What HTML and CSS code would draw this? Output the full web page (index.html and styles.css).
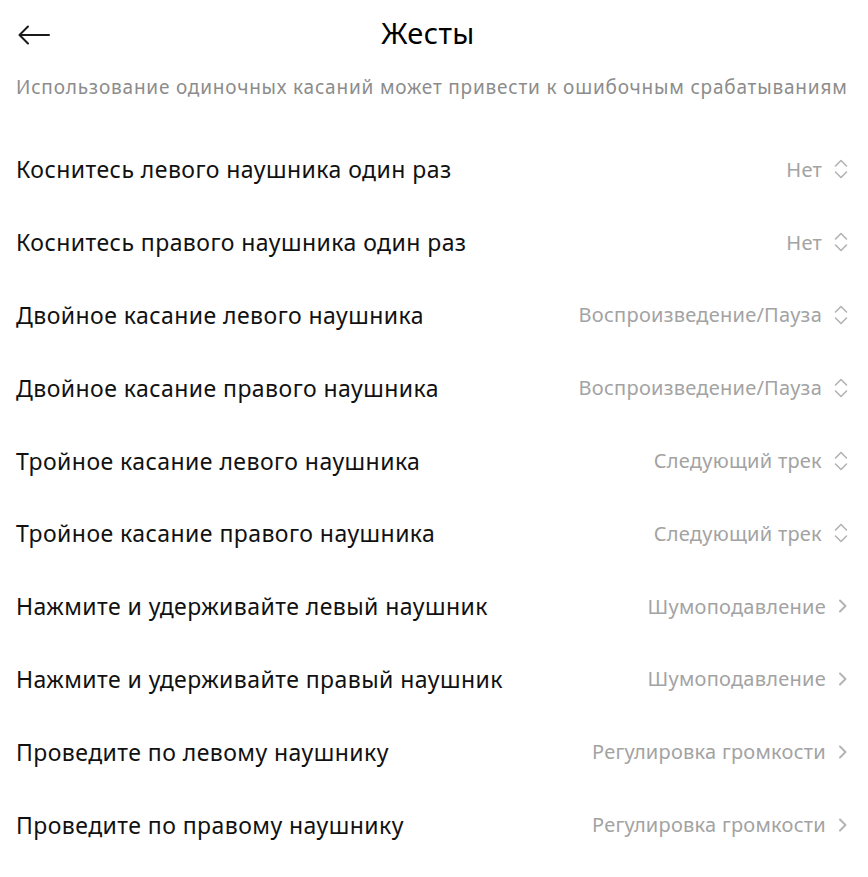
FILE: index.html
```html
<!DOCTYPE html>
<html lang="ru">
<head>
<meta charset="utf-8">
<link rel="stylesheet" href="styles.css">
</head>
<body>
<div class="page">
  <header class="header">
    <span class="back">
      <svg width="32" height="20" viewBox="0 0 32 20"><path d="M31 10H2M10 1.5L1.5 10L10 18.5" fill="none" stroke="#1a1a1a" stroke-width="2" stroke-linecap="round" stroke-linejoin="round"/></svg>
    </span>
    <h1 class="title">Жесты</h1>
  </header>
  <p class="hint">Использование одиночных касаний может привести к ошибочным срабатываниям</p>
  <ul class="list">
    <li class="row"><span class="label">Коснитесь левого наушника один раз</span><span class="value">Нет<svg class="updown" viewBox="0 0 14 20"><path d="M1.5 7L7 1.5L12.5 7M1.5 13L7 18.5L12.5 13" fill="none" stroke="#b3b3b3" stroke-width="1.6" stroke-linecap="round" stroke-linejoin="round"/></svg></span></li>
    <li class="row"><span class="label">Коснитесь правого наушника один раз</span><span class="value">Нет<svg class="updown" viewBox="0 0 14 20"><path d="M1.5 7L7 1.5L12.5 7M1.5 13L7 18.5L12.5 13" fill="none" stroke="#b3b3b3" stroke-width="1.6" stroke-linecap="round" stroke-linejoin="round"/></svg></span></li>
    <li class="row"><span class="label">Двойное касание левого наушника</span><span class="value">Воспроизведение/Пауза<svg class="updown" viewBox="0 0 14 20"><path d="M1.5 7L7 1.5L12.5 7M1.5 13L7 18.5L12.5 13" fill="none" stroke="#b3b3b3" stroke-width="1.6" stroke-linecap="round" stroke-linejoin="round"/></svg></span></li>
    <li class="row"><span class="label">Двойное касание правого наушника</span><span class="value">Воспроизведение/Пауза<svg class="updown" viewBox="0 0 14 20"><path d="M1.5 7L7 1.5L12.5 7M1.5 13L7 18.5L12.5 13" fill="none" stroke="#b3b3b3" stroke-width="1.6" stroke-linecap="round" stroke-linejoin="round"/></svg></span></li>
    <li class="row"><span class="label">Тройное касание левого наушника</span><span class="value">Следующий трек<svg class="updown" viewBox="0 0 14 20"><path d="M1.5 7L7 1.5L12.5 7M1.5 13L7 18.5L12.5 13" fill="none" stroke="#b3b3b3" stroke-width="1.6" stroke-linecap="round" stroke-linejoin="round"/></svg></span></li>
    <li class="row"><span class="label">Тройное касание правого наушника</span><span class="value">Следующий трек<svg class="updown" viewBox="0 0 14 20"><path d="M1.5 7L7 1.5L12.5 7M1.5 13L7 18.5L12.5 13" fill="none" stroke="#b3b3b3" stroke-width="1.6" stroke-linecap="round" stroke-linejoin="round"/></svg></span></li>
    <li class="row"><span class="label">Нажмите и удерживайте левый наушник</span><span class="value">Шумоподавление<svg class="next" viewBox="0 0 10 14"><path d="M2 1.5L7.5 7L2 12.5" fill="none" stroke="#b3b3b3" stroke-width="2" stroke-linecap="round" stroke-linejoin="round"/></svg></span></li>
    <li class="row"><span class="label">Нажмите и удерживайте правый наушник</span><span class="value">Шумоподавление<svg class="next" viewBox="0 0 10 14"><path d="M2 1.5L7.5 7L2 12.5" fill="none" stroke="#b3b3b3" stroke-width="2" stroke-linecap="round" stroke-linejoin="round"/></svg></span></li>
    <li class="row"><span class="label">Проведите по левому наушнику</span><span class="value">Регулировка громкости<svg class="next" viewBox="0 0 10 14"><path d="M2 1.5L7.5 7L2 12.5" fill="none" stroke="#b3b3b3" stroke-width="2" stroke-linecap="round" stroke-linejoin="round"/></svg></span></li>
    <li class="row"><span class="label">Проведите по правому наушнику</span><span class="value">Регулировка громкости<svg class="next" viewBox="0 0 10 14"><path d="M2 1.5L7.5 7L2 12.5" fill="none" stroke="#b3b3b3" stroke-width="2" stroke-linecap="round" stroke-linejoin="round"/></svg></span></li>
  </ul>
</div>
</body>
</html>
```

FILE: styles.css
```css
* { box-sizing: border-box; }
html, body { margin: 0; padding: 0; background: #fff; }
body {
  font-family: "Noto Sans", "Open Sans", sans-serif;
  color: #111;
}
.page {
  width: 868px;
  padding: 0 20px 0 16px;
}
.header {
  height: 68px;
  padding-bottom: 4px;
  display: flex;
  align-items: center;
  justify-content: center;
  position: relative;
}
.back {
  position: absolute;
  left: 2px;
  top: 25px;
  display: flex;
}
.title {
  margin: 0;
  font-size: 29px;
  font-weight: 400;
  letter-spacing: 0.4px;
  color: #000;
  transform: translateX(-4px);
}
.hint {
  margin: 0;
  height: 38px;
  line-height: 38px;
  font-size: 19px;
  letter-spacing: 0.8px;
  color: #8c8c8c;
  white-space: nowrap;
}
.list {
  list-style: none;
  margin: 0;
  padding: 0;
  padding-top: 27px;
}
.row {
  height: 72.8px;
  display: flex;
  align-items: center;
  justify-content: space-between;
}
.label {
  font-size: 23px;
  letter-spacing: 0.45px;
  color: #111;
}
.value {
  display: flex;
  align-items: center;
  font-size: 20px;
  letter-spacing: 0.25px;
  color: #a3a3a3;
}
.updown {
  width: 14px;
  height: 20px;
  margin-left: 12px;
}
.next {
  width: 10px;
  height: 14px;
  margin-left: 12px;
}
```
